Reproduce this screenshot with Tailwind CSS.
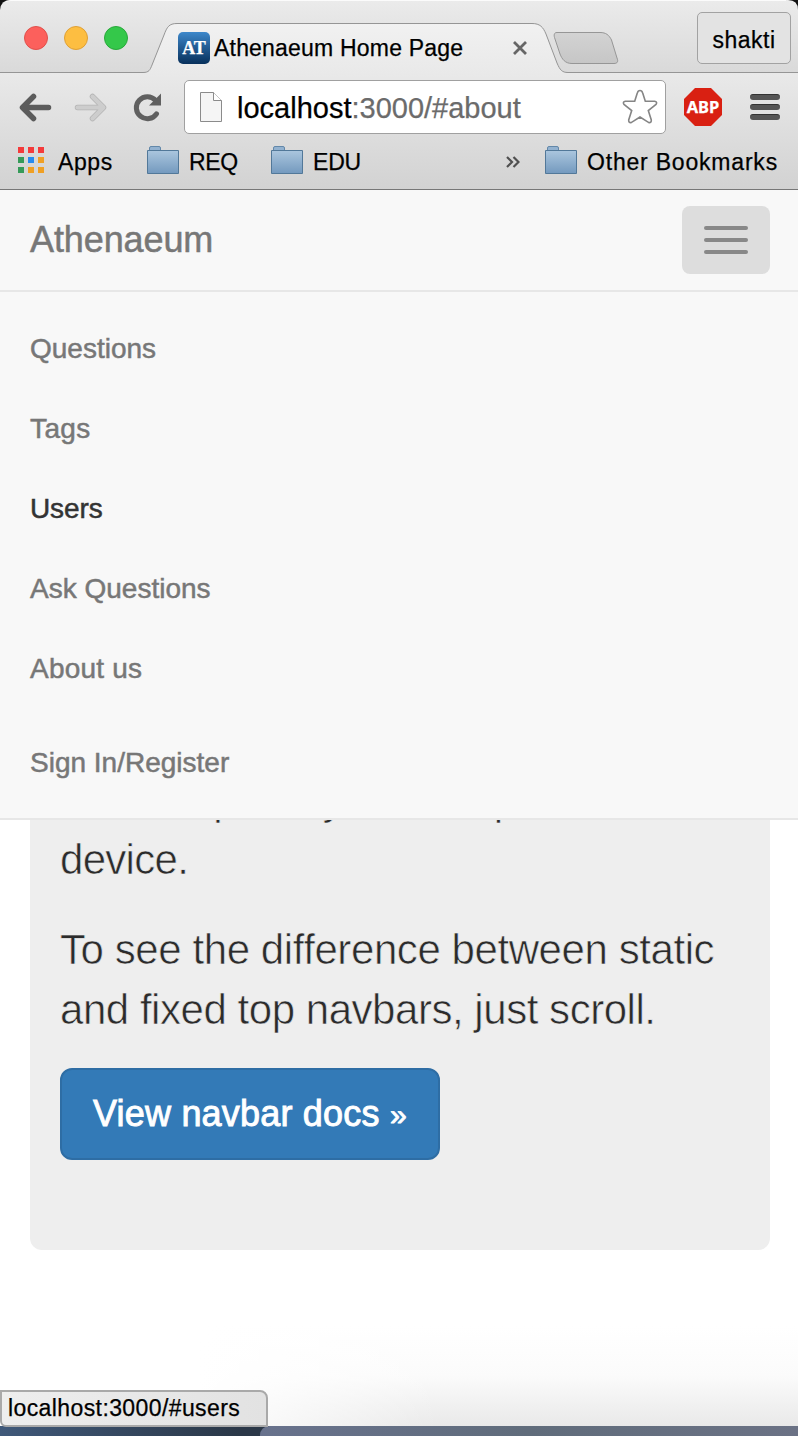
<!DOCTYPE html>
<html lang="en">
<head>
<meta charset="utf-8">
<title>Athenaeum Home Page</title>
<script src="https://cdn.jsdelivr.net/npm/@tailwindcss/browser@4"></script>
</head>
<body class="bg-white">
<div class="relative flex h-[1436px] w-[798px] flex-col overflow-hidden bg-white font-['Liberation_Sans',Arial,sans-serif]">

  <!-- Browser chrome -->
  <header class="relative h-[190px] shrink-0 text-black [-webkit-text-stroke:0.25px_currentColor]">
    <svg class="absolute inset-0" width="798" height="190" viewBox="0 0 798 190">
      <defs>
        <linearGradient id="strip" x1="0" y1="0" x2="0" y2="1"><stop offset="0" stop-color="#ebebeb"/><stop offset="1" stop-color="#d9d9d9"/></linearGradient>
        <linearGradient id="bar" gradientUnits="userSpaceOnUse" x1="0" y1="24" x2="0" y2="190"><stop offset="0" stop-color="#f1f1f1"/><stop offset=".3" stop-color="#e9e9e9"/><stop offset="1" stop-color="#d2d2d2"/></linearGradient>
        <linearGradient id="newtab" x1="0" y1="0" x2="0" y2="1"><stop offset="0" stop-color="#d3d3d3"/><stop offset="1" stop-color="#c6c6c6"/></linearGradient>
      </defs>
      <rect width="798" height="190" fill="#111"/>
      <path d="M0 73V10Q1 0 10 0H788Q798 0 798 10V73Z" fill="url(#strip)"/>
      <path d="M6 1.500Q8 .5 12 .5H786" fill="none" stroke="#fff" stroke-opacity=".8"/>
      <path d="M0 72.500H143C149 72.500 150 70 152 65L164 35C167 27 169 23.500 177 23.500H532C540 23.500 543 27 546 34L557 63C560 70 562 72.500 568 72.500H798V190H0Z" fill="url(#bar)"/>
      <path d="M0 72.500H143C149 72.500 150 70 152 65L164 35C167 27 169 23.500 177 23.500H532C540 23.500 543 27 546 34L557 63C560 70 562 72.500 568 72.500H798" fill="none" stroke="#959595"/>
      <path d="M557 32.500H600C606 32.500 609 35 611.500 40L617 58C618.500 61.500 617.500 63.500 614 63.500H572C565 63.500 562 59 560 54L555 39C553.500 35 554 32.500 557 32.500Z" fill="url(#newtab)" stroke="#969696"/>
      <path d="M0 189.500H798" stroke="#777"/>
    </svg>

    <div class="relative flex h-[73px] items-start">
      <div class="ml-6 mt-[26px] flex gap-4">
        <span class="size-6 rounded-full border border-[#e0504b] bg-[#fc605c]"></span>
        <span class="size-6 rounded-full border border-[#dfa036] bg-[#fdbe41]"></span>
        <span class="size-6 rounded-full border border-[#28a83a] bg-[#34c84a]"></span>
      </div>
      <div class="ml-[50px] mt-8 flex h-8 items-center">
        <span class="flex size-8 items-center justify-center rounded-[5px] bg-linear-to-b from-[#3d88cb] to-[#08315c] font-['Liberation_Serif',serif] text-[18px] font-bold leading-none text-white">AT</span>
        <span class="ml-1 w-[298px] whitespace-nowrap text-[23px] leading-8 tracking-[0.2px]">Athenaeum Home Page</span>
        <svg width="16" height="16" viewBox="0 0 16 16"><path d="M2 2L14 14M14 2L2 14" stroke="#666" stroke-width="2.800"/></svg>
      </div>
      <div class="ml-auto mr-[7px] mt-3 flex h-[52px] w-[94px] items-center justify-center rounded-[5px] border border-[#a2a2a2] bg-[#e3e3e3] pt-1 text-[23px] tracking-[0.5px]">shakti</div>
    </div>

    <div class="relative flex h-[68px] items-center">
      <svg class="ml-[19px]" width="34" height="30" viewBox="0 0 34 30"><path d="M29.500 15.500H5M14.500 4.500L3.500 15.500L14.500 26.500" fill="none" stroke="#5c5c5c" stroke-width="5.500" stroke-linecap="round" stroke-linejoin="round"/></svg>
      <svg class="ml-[21px]" width="34" height="30" viewBox="0 0 34 30"><path d="M3.500 15.500H28M18.500 4.500L29.500 15.500L18.500 26.500" fill="none" stroke="#b5b5b5" stroke-width="5.500" stroke-linecap="round" stroke-linejoin="round"/><path d="M3.500 15.500H28M18.500 4.500L29.500 15.500L18.500 26.500" fill="none" stroke="#cdcdcd" stroke-width="4" stroke-linecap="round" stroke-linejoin="round"/></svg>
      <svg class="ml-[25px]" width="30" height="30" viewBox="0 0 30 30"><path d="M22.500 8.300A11 11 0 1 0 23.500 21.800" fill="none" stroke="#606060" stroke-width="5" stroke-linecap="round"/><path d="M28 1.500V13.500H16Z" fill="#606060"/></svg>
      <div class="ml-[21px] flex h-[54px] w-[482px] items-center rounded-[5px] border border-[#a0a0a0] bg-white">
        <svg class="ml-[15px]" width="22" height="30" viewBox="0 0 22 30"><path d="M.5 .5H13.500L21.500 8.500V29.500H.5Z" fill="#f5f5f5" stroke="#8b8b8b"/><path d="M13.500 .5V8.500H21.500" fill="#fff" stroke="#8b8b8b"/></svg>
        <span class="ml-[15px] whitespace-nowrap pt-0.5 text-[29px] leading-8">localhost<span class="text-[#6b6b6b]">:3000/#about</span></span>
        <svg class="ml-auto mr-[7px]" width="36" height="36" viewBox="0 0 36 36"><path d="M18 1.500Q20 1.500 20.700 4L23.300 12.300H32.500Q35.800 13 34 15.500L26.300 21.500L29.300 31Q29.500 34 26.800 33.600L18 28L9.200 33.600Q6.500 34 6.700 31L9.700 21.500L2 15.500Q.2 13 3.500 12.300H12.700L15.300 4Q16 1.500 18 1.500Z" fill="#fff" stroke="#858585" stroke-width="1.600"/></svg>
      </div>
      <div class="relative ml-[18px] size-[38px]">
        <svg class="absolute inset-0" width="38" height="38" viewBox="0 0 38 38"><path d="M11 0H27L38 11V27L27 38H11L0 27V11Z" fill="#d92012"/></svg>
        <span class="relative flex h-full items-center justify-center font-['Noto_Sans','Open_Sans',sans-serif] text-[16.5px] font-bold leading-none text-white">ABP</span>
      </div>
      <div class="ml-7 flex flex-col gap-1">
        <span class="h-1.5 w-[30px] rounded-full border-t border-[#333] bg-[#555]"></span>
        <span class="h-1.5 w-[30px] rounded-full border-t border-[#333] bg-[#555]"></span>
        <span class="h-1.5 w-[30px] rounded-full border-t border-[#333] bg-[#555]"></span>
      </div>
    </div>

    <div class="relative flex h-[42px] items-center whitespace-nowrap text-[23px] leading-8 tracking-[0.6px]">
      <svg class="ml-[18px] -mt-1" width="26" height="26" viewBox="0 0 26 26"><path d="M0 0h6v6H0zM10 0h6v6h-6zM20 0h6v6h-6z" fill="#f43b3b"/><path d="M0 10h6v6H0zM0 20h6v6H0z" fill="#369b59"/><path d="M10 10h6v6h-6z" fill="#268bf0"/><path d="M20 10h6v6h-6zM10 20h6v6h-6zM20 20h6v6h-6z" fill="#f0a024"/></svg>
      <span class="ml-[14px] w-[89px]">Apps</span>
      <svg class="-mt-1" width="32" height="28" viewBox="0 0 32 28"><defs><linearGradient id="folder" x1="0" y1="0" x2="0" y2="1"><stop offset="0" stop-color="#abc6de"/><stop offset="1" stop-color="#7399be"/></linearGradient></defs><path d="M2.500 6V2Q2.500 .5 4 .5H12Q13.500 .5 13.500 2V6" fill="#93b2d0" stroke="#6388a9"/><path d="M.5 4.500H31.500V27.500H.5Z" fill="url(#folder)" stroke="#527899"/></svg>
      <span class="ml-[10px] w-[82px] tracking-[-0.3px]">REQ</span>
      <svg class="-mt-1" width="32" height="28" viewBox="0 0 32 28"><path d="M2.500 6V2Q2.500 .5 4 .5H12Q13.500 .5 13.500 2V6" fill="#93b2d0" stroke="#6388a9"/><path d="M.5 4.500H31.500V27.500H.5Z" fill="url(#folder)" stroke="#527899"/></svg>
      <span class="ml-[10px] w-[193px] tracking-[-0.2px]">EDU</span>
      <svg width="14" height="12" viewBox="0 0 14 12"><path d="M1 1L6 6L1 11M7.500 1L12.500 6L7.500 11" fill="none" stroke="#505050" stroke-width="2.200"/></svg>
      <svg class="ml-[25px] -mt-1" width="32" height="28" viewBox="0 0 32 28"><path d="M2.500 6V2Q2.500 .5 4 .5H12Q13.500 .5 13.500 2V6" fill="#93b2d0" stroke="#6388a9"/><path d="M.5 4.500H31.500V27.500H.5Z" fill="url(#folder)" stroke="#527899"/></svg>
      <span class="ml-[10px] tracking-[0.8px]">Other Bookmarks</span>
    </div>
  </header>

  <!-- Site navigation -->
  <nav class="shrink-0 border-b-2 border-[#e7e7e7] bg-[#f8f8f8] text-[#777]">
    <div class="flex h-[102px] items-start justify-between border-b-2 border-[#e7e7e7] pl-[30px] pr-7">
      <a class="text-[36px] leading-[100px] tracking-[-0.1px] [-webkit-text-stroke:0.5px_#777]">Athenaeum</a>
      <button class="mt-4 flex h-[68px] w-[88px] flex-col items-center justify-center gap-2 rounded-lg bg-[#ddd]">
        <span class="h-1 w-11 rounded-[2px] bg-[#888]"></span>
        <span class="h-1 w-11 rounded-[2px] bg-[#888]"></span>
        <span class="h-1 w-11 rounded-[2px] bg-[#888]"></span>
      </button>
    </div>
    <div class="pb-[15px] pl-[30px] pt-[17px] text-[28px] leading-[80px] [-webkit-text-stroke:0.5px_currentColor]">
      <ul>
        <li>Questions</li>
        <li class="tracking-[0.4px]">Tags</li>
        <li class="text-[#333] tracking-[-0.1px]">Users</li>
        <li>Ask Questions</li>
        <li class="tracking-[0.2px]">About us</li>
      </ul>
      <ul class="mt-[14px]">
        <li>Sign In/Register</li>
      </ul>
    </div>
  </nav>

  <!-- Page content -->
  <main class="flex grow flex-col bg-white">
    <section class="ml-[30px] h-[430px] w-[740px] overflow-hidden rounded-b-xl bg-[#eee] px-[30px]">
      <div class="-mt-[50px] whitespace-nowrap text-[42px] leading-[60px] tracking-[-0.46px] text-[#2b2b2b] [-webkit-text-stroke:0.6px_#eee]">
        <p class="tracking-[-0.7px]">also adapts to your viewport and<br>device.</p>
        <p class="mt-[30px]"><span class="tracking-[-0.42px]">To see the difference between static</span><br>and fixed top navbars, just scroll.</p>
      </div>
      <a class="mt-7 flex h-[92px] w-[380px] items-center whitespace-pre rounded-xl border-2 border-[#2e6da4] bg-[#337ab7] pl-[31px] text-[36px] tracking-[0.2px] text-white [-webkit-text-stroke:0.9px_#fff]">View navbar docs <span class="text-[30px]">»</span></a>
    </section>
    <div class="grow"></div>
    <footer class="relative flex h-[110px] flex-col">
      <div class="h-[100px] bg-linear-to-b from-white via-[#fbfbfb] to-[#e9e9e9]"></div>
      <div class="absolute inset-x-0 top-0 h-[100px] bg-linear-to-r from-white from-25% to-transparent to-55%"></div>
      <div class="relative flex h-[10px] bg-linear-to-r from-[#40597a] to-[#2b3848] to-30%">
        <div class="ml-[260px] grow rounded-tl-[9px] bg-linear-to-r from-[#68728d] via-[#606c7b] to-[#6b7285]"></div>
      </div>
      <div class="absolute left-0 top-16 flex h-[37px] w-[268px] items-center rounded-tr-lg rounded-bl-md border-2 border-[#a9a9a9] bg-linear-to-r from-[#eeeeee] to-[#e2e2e2] pl-1.5 text-[23px] tracking-[0.4px] text-black [-webkit-text-stroke:0.25px_#000]">localhost:3000/#users</div>
    </footer>
  </main>
</div>
</body>
</html>
